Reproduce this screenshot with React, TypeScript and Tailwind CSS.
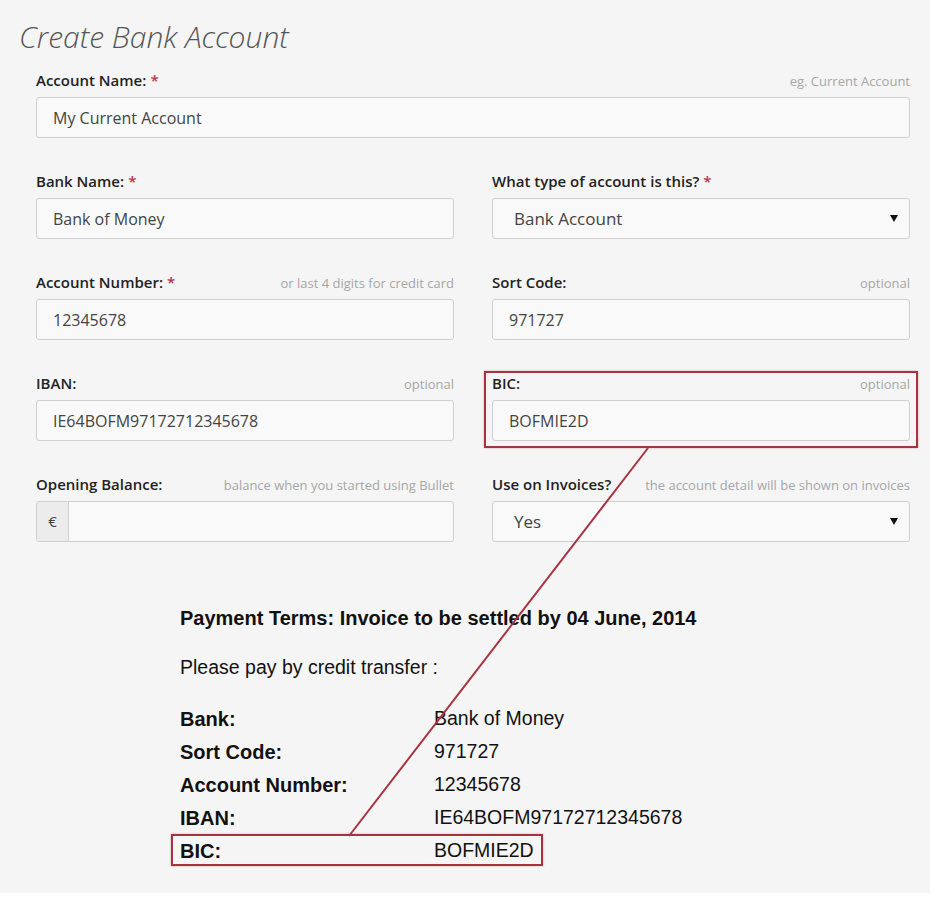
import type { ReactNode } from "react";

const sans = { fontFamily: '"Open Sans", "Liberation Sans", sans-serif' };
const arial = { fontFamily: '"Liberation Sans", Arial, sans-serif' };

function Label({ text, required, hint }: { text: string; required?: boolean; hint?: string }) {
  return (
    <div className="flex items-baseline justify-between h-5 leading-5">
      <span className="text-[15px] font-semibold text-[#222]">
        {text}
        {required && <span className="ml-1 text-[#b5364a]">*</span>}
      </span>
      {hint && <span className="text-[13px] text-[#a6a6a6]">{hint}</span>}
    </div>
  );
}

function Caret() {
  return (
    <svg width="8" height="7" viewBox="0 0 8 7" className="mr-[1px]">
      <path d="M0 0 H8 L4 7 Z" fill="#111" />
    </svg>
  );
}

function Field({
  label,
  required,
  hint,
  value,
  select,
  children,
}: {
  label: string;
  required?: boolean;
  hint?: string;
  value?: string;
  select?: boolean;
  children?: ReactNode;
}) {
  return (
    <div className="relative">
      <Label text={label} required={required} hint={hint} />
      {children ?? (
        <div
          className={
            "mt-[7px] h-[41px] flex items-center justify-between rounded-[3px] border border-[#cfcfcf] bg-[#f9f9f9] " +
            (select ? "pl-[21px] pr-[10px] text-[17px] text-[#444]" : "pl-[16px] pr-3 text-[16px] text-[#444]")
          }
        >
          <span>{value}</span>
          {select && <Caret />}
        </div>
      )}
    </div>
  );
}

const invoiceRows = [
  ["Bank:", "Bank of Money"],
  ["Sort Code:", "971727"],
  ["Account Number:", "12345678"],
  ["IBAN:", "IE64BOFM97172712345678"],
];

export default function App() {
  return (
    <div className="w-full min-h-screen bg-white">
      <div className="relative w-[930px] h-[893px] bg-[#f6f5f5] pt-[17px]" style={sans}>
        <h1 className="pl-[19px] text-[30px] leading-[40px] font-light italic text-[#555]">
          Create Bank Account
        </h1>

        <div className="ml-[36px] w-[874px] mt-[13px]">
          <Field label="Account Name:" required hint="eg. Current Account" value="My Current Account" />

          <div className="grid grid-cols-2 gap-x-[38px] gap-y-[33px] mt-[33px]">
            <Field label="Bank Name:" required value="Bank of Money" />
            <Field label="What type of account is this?" required value="Bank Account" select />
            <Field label="Account Number:" required hint="or last 4 digits for credit card" value="12345678" />
            <Field label="Sort Code:" hint="optional" value="971727" />
            <Field label="IBAN:" hint="optional" value="IE64BOFM97172712345678" />
            <div className="relative">
              <Field label="BIC:" hint="optional" value="BOFMIE2D" />
              <div className="absolute -left-[8px] -right-[8px] -top-[2px] -bottom-[7px] border-2 border-[#a8323f] shadow-[0_0_2px_rgba(168,50,63,0.4)]" />
            </div>
            <Field label="Opening Balance:" hint="balance when you started using Bullet">
              <div className="mt-[7px] h-[41px] flex rounded-[3px] border border-[#cfcfcf] bg-[#f9f9f9] overflow-hidden">
                <div className="w-[32px] flex items-center justify-center bg-[#ececec] border-r border-[#cfcfcf] text-[15px] text-[#444]">
                  €
                </div>
                <div className="flex-1" />
              </div>
            </Field>
            <Field
              label="Use on Invoices?"
              hint="the account detail will be shown on invoices"
              value="Yes"
              select
            />
          </div>
        </div>

        <div className="ml-[180px] mt-[63px] text-[#111]" style={arial}>
          <div className="text-[20px] font-bold leading-[26px]">
            Payment Terms: Invoice to be settled by 04 June, 2014
          </div>
          <div className="text-[19.5px] leading-[26px] mt-[23px]">Please pay by credit transfer :</div>
          <div className="mt-[22px] text-[19.5px]">
            {invoiceRows.map(([k, v]) => (
              <div key={k} className="flex h-[33px] items-center">
                <span className="w-[254px] font-bold text-[20px]">{k}</span>
                <span>{v}</span>
              </div>
            ))}
            <div className="relative flex h-[33px] items-center">
              <span className="w-[254px] font-bold text-[20px]">BIC:</span>
              <span>BOFMIE2D</span>
              <div className="absolute -left-[9px] w-[372px] top-[0px] bottom-[1px] border-2 border-[#a8323f] shadow-[0_0_2px_rgba(168,50,63,0.4)]" />
            </div>
          </div>
        </div>

        <svg className="absolute inset-0 pointer-events-none" width="930" height="893">
          <line x1="648" y1="448" x2="349" y2="836" stroke="#a8323f" strokeWidth="2" />
        </svg>
      </div>
    </div>
  );
}
